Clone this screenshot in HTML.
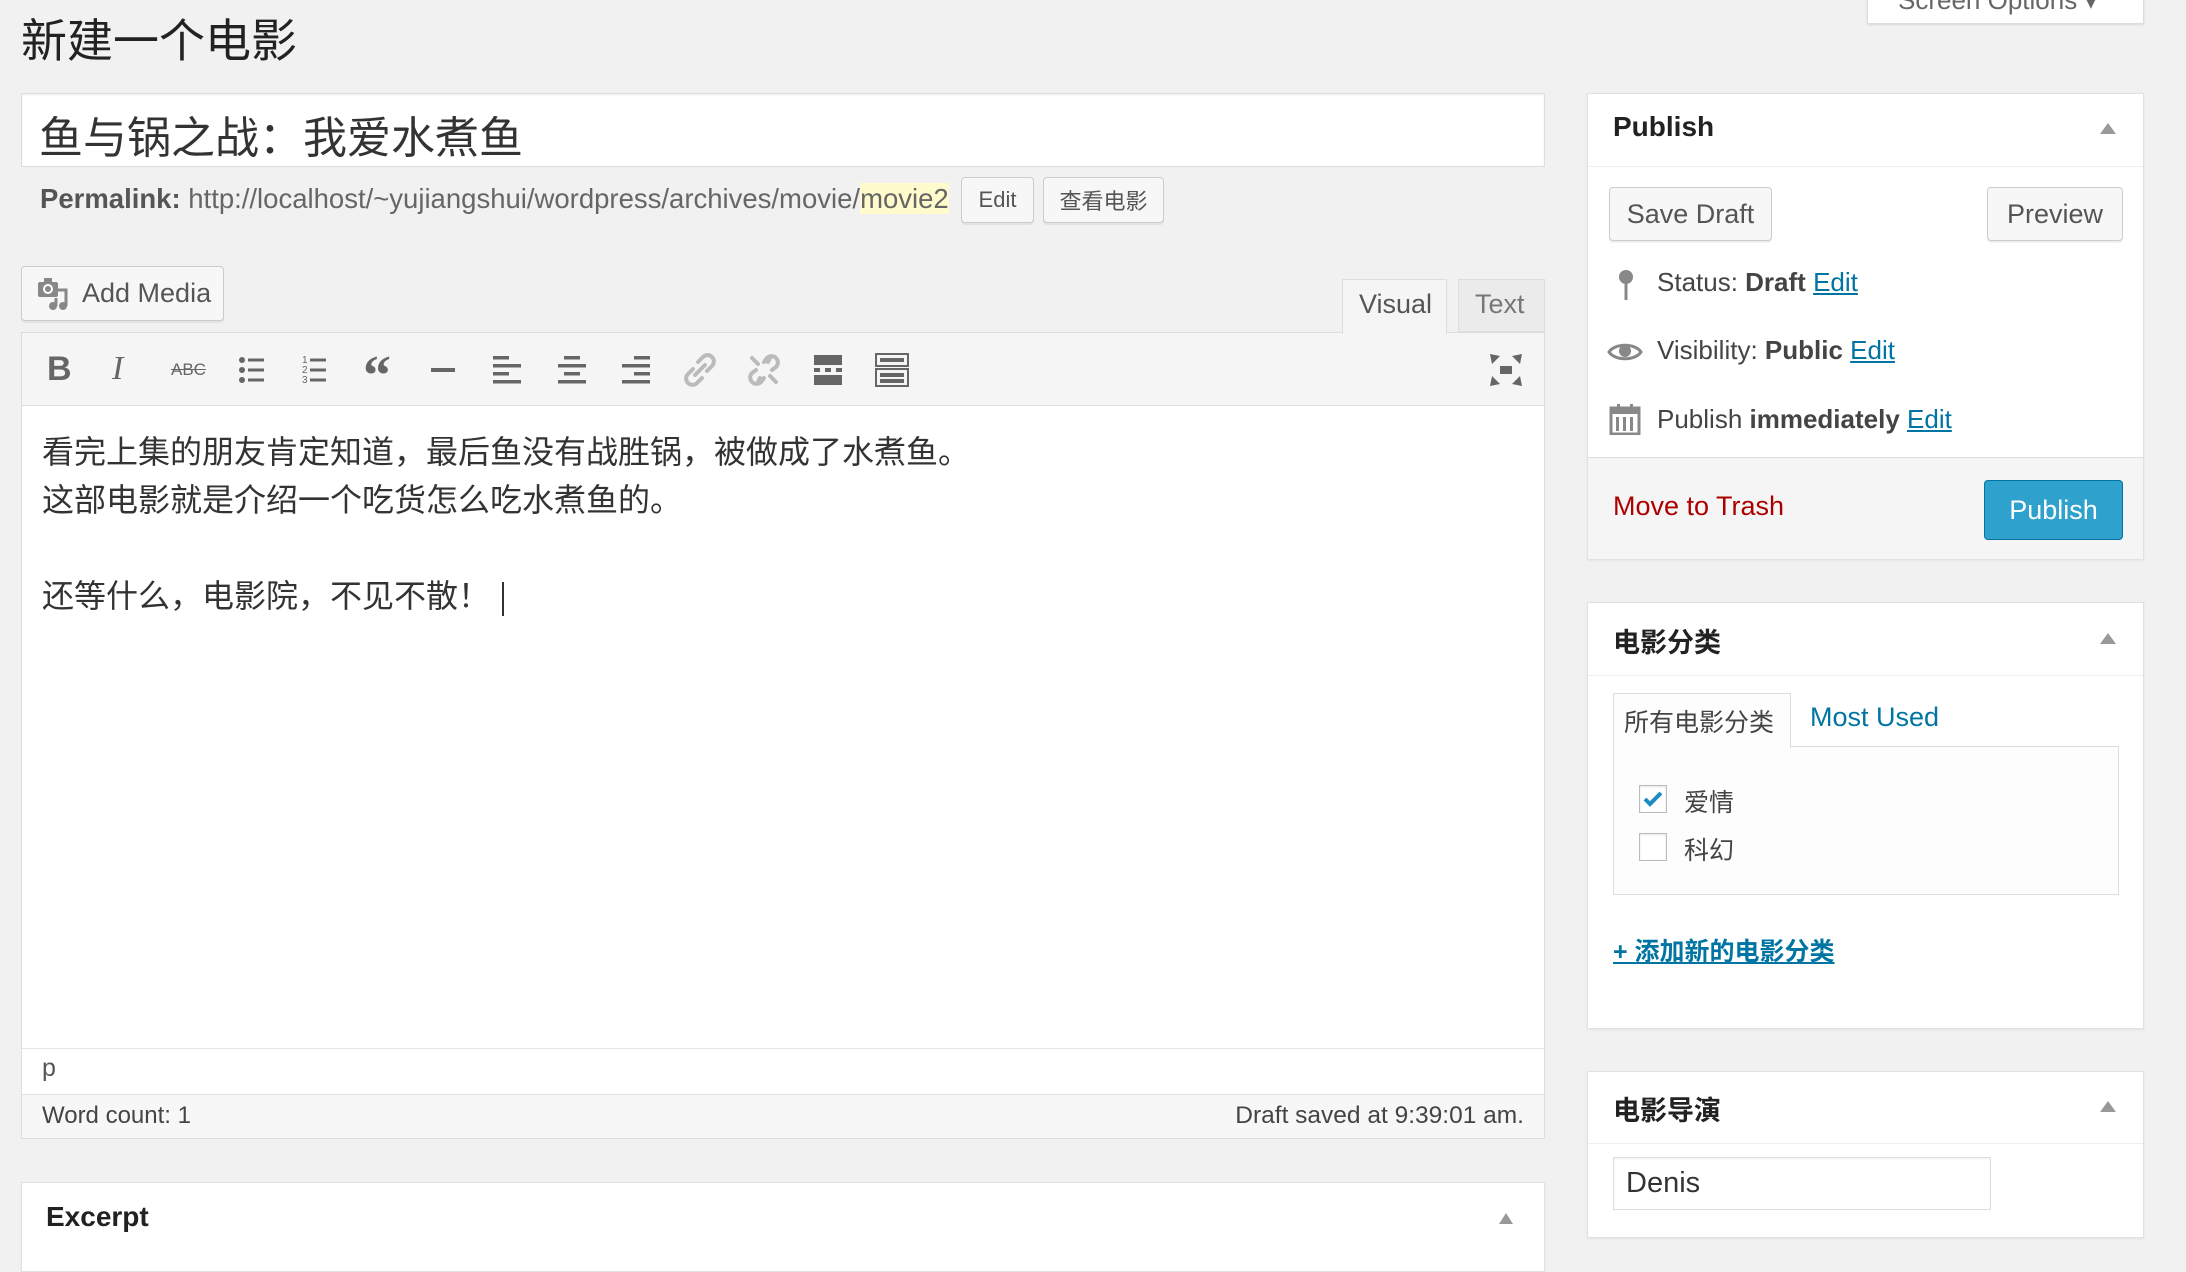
<!DOCTYPE html>
<html><head><meta charset="utf-8"><style>
*{box-sizing:border-box;margin:0;padding:0}
body{width:2186px;height:1258px;overflow:hidden;background:#f1f1f1;font-family:"Liberation Sans","Noto Sans CJK SC",sans-serif;color:#444;position:relative}
.a{position:absolute}
.box{position:absolute;background:#fff;border:1px solid #e1e1e1;box-shadow:0 1px 2px rgba(0,0,0,.06)}
.btn{position:absolute;background:#f7f7f7;border:1px solid #ccc;border-radius:4px;box-shadow:0 2px 0 rgba(0,0,0,.06);color:#555;display:flex;align-items:center;justify-content:center}
.lbl{position:absolute;white-space:nowrap}
a{color:#0074a2;text-decoration:underline}
.tri{position:absolute;width:0;height:0;border-left:8px solid transparent;border-right:8px solid transparent;border-bottom:11px solid #999}
.ic{position:absolute;top:350px;width:40px;height:40px}
</style></head><body>

<div class="lbl" style="left:21px;top:5px;font-size:46px;color:#222">新建一个电影</div>

<div class="a" style="left:1867px;top:-8px;width:277px;height:32px;background:#fff;border:1px solid #ddd;box-shadow:0 1px 2px rgba(0,0,0,.1)"><div class="lbl" style="left:30px;top:-8px;font-size:26px;color:#666">Screen Options ▾</div></div>

<!-- title -->
<div class="a" style="left:21px;top:93px;width:1524px;height:74px;background:#fff;border:1px solid #ddd;box-shadow:inset 0 1px 2px rgba(0,0,0,.07)"></div>
<div class="lbl" style="left:39px;top:102px;font-size:44px;color:#333">鱼与锅之战：我爱水煮鱼</div>

<div class="lbl" style="left:40px;top:183px;font-size:27.5px;color:#666"><b style="color:#555">Permalink:</b> http://localhost/~yujiangshui/wordpress/archives/movie/<span style="background:#fffbcc">movie2</span></div>
<div class="btn" style="left:961px;top:177px;width:73px;height:46px;font-size:22px">Edit</div>
<div class="btn" style="left:1043px;top:177px;width:121px;height:46px;font-size:22px">查看电影</div>

<!-- add media -->
<div class="btn" style="left:21px;top:266px;width:203px;height:55px;font-size:27px;justify-content:flex-start;padding-left:60px">Add Media</div>
<svg class="a" style="left:36px;top:276px" width="34" height="36" viewBox="0 0 34 36"><rect x="2" y="6" width="20" height="15" rx="2" fill="#888"/><rect x="8" y="2" width="8" height="6" fill="#888"/><circle cx="12" cy="13" r="5" fill="#fff"/><circle cx="12" cy="13" r="3" fill="#888"/><path d="M22 14h8v16" stroke="#888" stroke-width="3" fill="none"/><circle cx="27" cy="30" r="4" fill="#888"/><circle cx="17" cy="30" r="4" fill="#888"/><path d="M20 30v-8" stroke="#888" stroke-width="3"/></svg>

<!-- tabs -->
<div class="a" style="left:1342px;top:279px;width:105px;height:55px;background:#f5f5f5;border:1px solid #ddd;border-bottom:none;z-index:2"></div>
<div class="lbl" style="left:1359px;top:289px;font-size:27px;color:#555;z-index:3">Visual</div>
<div class="a" style="left:1458px;top:279px;width:87px;height:53px;background:#ebebeb;border:1px solid #ddd"></div>
<div class="lbl" style="left:1475px;top:289px;font-size:27px;color:#777">Text</div>

<!-- editor -->
<div class="a" style="left:21px;top:332px;width:1524px;height:807px;background:#fff;border:1px solid #ddd"></div>
<div class="a" style="left:22px;top:333px;width:1522px;height:73px;background:#f5f5f5;border-bottom:1px solid #ddd"></div>
<div class="lbl" style="left:47px;top:350px;font-size:34px;font-weight:bold;color:#666">B</div>
<div class="lbl" style="left:112px;top:350px;font-size:34px;font-style:italic;font-family:'Liberation Serif',serif;color:#666">I</div>
<div class="lbl" style="left:171px;top:360px;font-size:17px;color:#666;text-decoration:line-through">ABC</div>
<svg class="ic" style="left:232px" viewBox="0 0 40 40"><g fill="#666"><circle cx="10" cy="10" r="3"/><circle cx="10" cy="20" r="3"/><circle cx="10" cy="30" r="3"/><rect x="16" y="8.5" width="16" height="3"/><rect x="16" y="18.5" width="16" height="3"/><rect x="16" y="28.5" width="16" height="3"/></g></svg>
<svg class="ic" style="left:296px" viewBox="0 0 40 40"><g fill="#666" font-size="10" font-family="Liberation Sans"><text x="6" y="13">1</text><text x="6" y="23">2</text><text x="6" y="33">3</text><rect x="14" y="8.5" width="16" height="3"/><rect x="14" y="18.5" width="16" height="3"/><rect x="14" y="28.5" width="16" height="3"/></g></svg>
<div class="lbl" style="left:363px;top:344px;font-size:56px;font-weight:bold;color:#666;font-family:'Liberation Serif',serif">“</div>
<svg class="ic" style="left:423px" viewBox="0 0 40 40"><rect x="8" y="18" width="24" height="4" fill="#666"/></svg>
<svg class="ic" style="left:487px" viewBox="0 0 40 40"><g fill="#666"><rect x="6" y="6" width="16" height="3.5"/><rect x="6" y="14" width="28" height="3.5"/><rect x="6" y="22" width="16" height="3.5"/><rect x="6" y="30" width="28" height="3.5"/></g></svg>
<svg class="ic" style="left:552px" viewBox="0 0 40 40"><g fill="#666"><rect x="12" y="6" width="16" height="3.5"/><rect x="6" y="14" width="28" height="3.5"/><rect x="12" y="22" width="16" height="3.5"/><rect x="6" y="30" width="28" height="3.5"/></g></svg>
<svg class="ic" style="left:616px" viewBox="0 0 40 40"><g fill="#666"><rect x="18" y="6" width="16" height="3.5"/><rect x="6" y="14" width="28" height="3.5"/><rect x="18" y="22" width="16" height="3.5"/><rect x="6" y="30" width="28" height="3.5"/></g></svg>
<svg class="ic" style="left:680px" viewBox="0 0 40 40"><g stroke="#bbb" stroke-width="4" fill="none" stroke-linecap="round"><path d="M18 12l5-5a6 6 0 0 1 9 9l-5 5"/><path d="M22 28l-5 5a6 6 0 0 1-9-9l5-5"/><path d="M15 25l10-10"/></g></svg>
<svg class="ic" style="left:744px" viewBox="0 0 40 40"><g stroke="#bbb" stroke-width="4" fill="none" stroke-linecap="round"><path d="M20 12l3-4a6 6 0 0 1 9 9l-4 3"/><path d="M20 28l-3 4a6 6 0 0 1-9-9l4-3"/><path d="M8 8l6 6M32 32l-6-6M26 8l-2 4M14 32l2-4"/></g></svg>
<svg class="ic" style="left:808px" viewBox="0 0 40 40"><g fill="#666"><rect x="6" y="5" width="28" height="10"/><rect x="6" y="18" width="6" height="4"/><rect x="17" y="18" width="6" height="4"/><rect x="28" y="18" width="6" height="4"/><rect x="6" y="25" width="28" height="10"/></g></svg>
<svg class="ic" style="left:872px" viewBox="0 0 40 40"><g fill="none" stroke="#666" stroke-width="2"><rect x="4" y="4" width="32" height="12"/><rect x="4" y="19" width="32" height="17"/></g><g fill="#666"><rect x="8" y="8" width="24" height="4"/><rect x="8" y="23" width="24" height="4"/><rect x="8" y="29" width="24" height="4"/></g></svg>
<svg class="ic" style="left:1486px" viewBox="0 0 40 40"><g fill="#666"><path d="M4 4l10 2-8 8z"/><path d="M36 4l-2 10-8-8z"/><path d="M4 36l2-10 8 8z"/><path d="M36 36l-10-2 8-8z"/><rect x="14" y="16" width="12" height="8"/></g></svg>

<div class="lbl" style="left:42px;top:428px;font-size:32px;color:#333;line-height:48px">看完上集的朋友肯定知道，最后鱼没有战胜锅，被做成了水煮鱼。<br>这部电影就是介绍一个吃货怎么吃水煮鱼的。<br><br>还等什么，电影院，不见不散！<span style="display:inline-block;width:2px;height:34px;background:#333;vertical-align:middle;margin-left:12px"></span></div>

<div class="a" style="left:22px;top:1048px;width:1522px;height:46px;background:#fff;border-top:1px solid #e5e5e5"></div>
<div class="lbl" style="left:42px;top:1054px;font-size:25px;color:#555">p</div>
<div class="a" style="left:22px;top:1094px;width:1522px;height:44px;background:#f7f7f7;border-top:1px solid #e1e1e1"></div>
<div class="lbl" style="left:42px;top:1102px;font-size:24px;color:#444">Word count: 1</div>
<div class="lbl" style="right:662px;top:1102px;font-size:24.5px;color:#444">Draft saved at 9:39:01 am.</div>

<!-- excerpt -->
<div class="box" style="left:21px;top:1182px;width:1524px;height:90px"></div>
<div class="lbl" style="left:46px;top:1201px;font-size:28px;font-weight:bold;color:#222">Excerpt</div>
<div class="tri" style="left:1499px;top:1213px;border-left-width:7px;border-right-width:7px"></div>

<!-- publish box -->
<div class="box" style="left:1587px;top:93px;width:557px;height:467px"></div>
<div class="a" style="left:1588px;top:166px;width:555px;height:1px;background:#eee"></div>
<div class="lbl" style="left:1613px;top:111px;font-size:28px;font-weight:bold;color:#222">Publish</div>
<div class="tri" style="left:2100px;top:123px"></div>
<div class="btn" style="left:1609px;top:187px;width:163px;height:54px;font-size:27px">Save Draft</div>
<div class="btn" style="left:1987px;top:187px;width:136px;height:54px;font-size:27px">Preview</div>
<svg class="a" style="left:1614px;top:268px" width="24" height="34" viewBox="0 0 24 34"><circle cx="12" cy="9" r="7" fill="#888"/><path d="M12 14v18" stroke="#888" stroke-width="3"/></svg>
<div class="lbl" style="left:1657px;top:267px;font-size:26px;color:#444">Status: <b>Draft</b> <a>Edit</a></div>
<svg class="a" style="left:1607px;top:340px" width="36" height="24" viewBox="0 0 36 24"><path d="M2 12C8 3 28 3 34 12C28 21 8 21 2 12Z" fill="none" stroke="#888" stroke-width="3"/><circle cx="18" cy="11" r="6" fill="#888"/></svg>
<div class="lbl" style="left:1657px;top:335px;font-size:26px;color:#444">Visibility: <b>Public</b> <a>Edit</a></div>
<svg class="a" style="left:1609px;top:403px" width="32" height="32" viewBox="0 0 32 32"><rect x="2" y="5" width="28" height="26" fill="none" stroke="#888" stroke-width="3"/><rect x="2" y="5" width="28" height="6" fill="#888"/><g fill="#888"><rect x="7" y="14" width="3" height="14"/><rect x="14" y="14" width="3" height="14"/><rect x="21" y="14" width="3" height="14"/><rect x="8" y="1" width="3" height="7"/><rect x="21" y="1" width="3" height="7"/></g></svg>
<div class="lbl" style="left:1657px;top:404px;font-size:26px;color:#444">Publish <b>immediately</b> <a>Edit</a></div>
<div class="a" style="left:1588px;top:457px;width:555px;height:102px;background:#f5f5f5;border-top:1px solid #ddd"></div>
<div class="lbl" style="left:1613px;top:491px;font-size:27px;color:#a00">Move to Trash</div>
<div class="a" style="left:1984px;top:480px;width:139px;height:60px;background:#2ea2cc;border:1px solid #0074a2;border-radius:4px;color:#fff;font-size:27px;display:flex;align-items:center;justify-content:center">Publish</div>

<!-- categories -->
<div class="box" style="left:1587px;top:602px;width:557px;height:427px"></div>
<div class="a" style="left:1588px;top:675px;width:555px;height:1px;background:#eee"></div>
<div class="lbl" style="left:1613px;top:621px;font-size:27px;font-weight:bold;color:#222">电影分类</div>
<div class="tri" style="left:2100px;top:633px"></div>
<div class="a" style="left:1613px;top:746px;width:506px;height:149px;background:#fdfdfd;border:1px solid #ddd"></div>
<div class="a" style="left:1613px;top:693px;width:178px;height:55px;background:#fdfdfd;border:1px solid #ddd;border-bottom:none"></div>
<div class="lbl" style="left:1624px;top:703px;font-size:25px;color:#444">所有电影分类</div>
<div class="lbl" style="left:1810px;top:702px;font-size:27px;color:#0074a2">Most Used</div>
<div class="a" style="left:1639px;top:785px;width:28px;height:28px;background:#fff;border:1px solid #bbb;box-shadow:inset 0 1px 2px rgba(0,0,0,.1)"></div>
<svg class="a" style="left:1641px;top:787px" width="24" height="24" viewBox="0 0 24 24"><path d="M4 12l5 5 11-11" stroke="#1e8cbe" stroke-width="4" fill="none"/></svg>
<div class="lbl" style="left:1684px;top:783px;font-size:25px;color:#444">爱情</div>
<div class="a" style="left:1639px;top:833px;width:28px;height:28px;background:#fff;border:1px solid #bbb;box-shadow:inset 0 1px 2px rgba(0,0,0,.1)"></div>
<div class="lbl" style="left:1684px;top:831px;font-size:25px;color:#444">科幻</div>
<div class="lbl" style="left:1613px;top:932px;font-size:25px;font-weight:bold"><a>+ 添加新的电影分类</a></div>

<!-- director -->
<div class="box" style="left:1587px;top:1071px;width:557px;height:167px"></div>
<div class="a" style="left:1588px;top:1143px;width:555px;height:1px;background:#eee"></div>
<div class="lbl" style="left:1613px;top:1089px;font-size:27px;font-weight:bold;color:#222">电影导演</div>
<div class="tri" style="left:2100px;top:1101px"></div>
<div class="a" style="left:1613px;top:1157px;width:378px;height:53px;background:#fff;border:1px solid #ddd;box-shadow:inset 0 1px 2px rgba(0,0,0,.07)"></div>
<div class="lbl" style="left:1626px;top:1167px;font-size:29px;color:#333">Denis</div>

</body></html>
